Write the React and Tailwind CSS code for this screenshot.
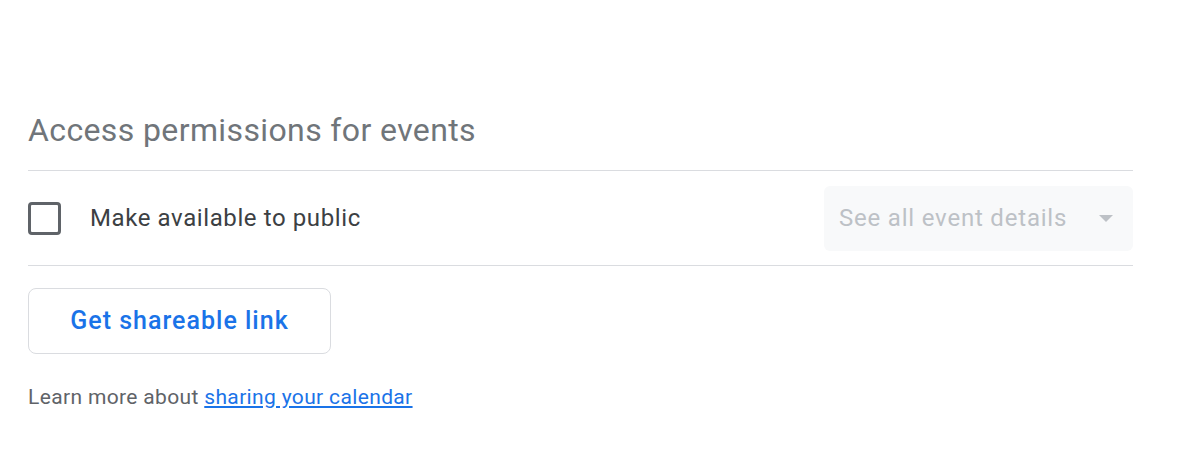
import React from 'react'

const App = () => {
  return (
    <div className="w-[1196px] h-[476px] bg-white" style={{ fontFamily: 'Roboto, "Open Sans", sans-serif' }}>
      <div className="pl-[28px] pt-[106px] w-[1133px]">
        {/* Heading */}
        <h2 className="text-[32px] leading-[48px] text-[#70757a] tracking-[0.38px]">
          Access permissions for events
        </h2>
        <div className="mt-[16px] h-px bg-[#dadce0]" />

        {/* Public row */}
        <div className="flex items-center justify-between h-[94px]">
          <label className="flex items-center">
            <span className="w-[33px] h-[33px] rounded-[4px] border-[3px] border-[#5f6368] box-border" />
            <span className="ml-[29px] text-[24px] tracking-[0.6px] text-[#3c4043]">Make available to public</span>
          </label>
          <div className="w-[309px] h-[65px] rounded-[6px] bg-[#f8f9fa] flex items-center justify-between pl-[15px] pr-[20px]">
            <span className="text-[24px] tracking-[0.8px] text-[#bdc1c6]">See all event details</span>
            <svg width="14" height="7" viewBox="0 0 14 7">
              <path d="M0 0 L14 0 L7 7 Z" fill="#bdc1c6" />
            </svg>
          </div>
        </div>
        <div className="h-px bg-[#dadce0]" />

        {/* Shareable link */}
        <button className="mt-[22px] w-[303px] h-[66px] rounded-[8px] border border-[#dadce0] bg-white text-[#1a73e8] text-[25px] font-medium tracking-[1px]">
          Get shareable link
        </button>

        <p className="mt-[28px] text-[21px] tracking-[0.35px] text-[#5f6368]">
          Learn more about{' '}
          <a href="#" className="text-[#1a73e8] underline">sharing your calendar</a>
        </p>
      </div>
    </div>
  )
}

export default App
